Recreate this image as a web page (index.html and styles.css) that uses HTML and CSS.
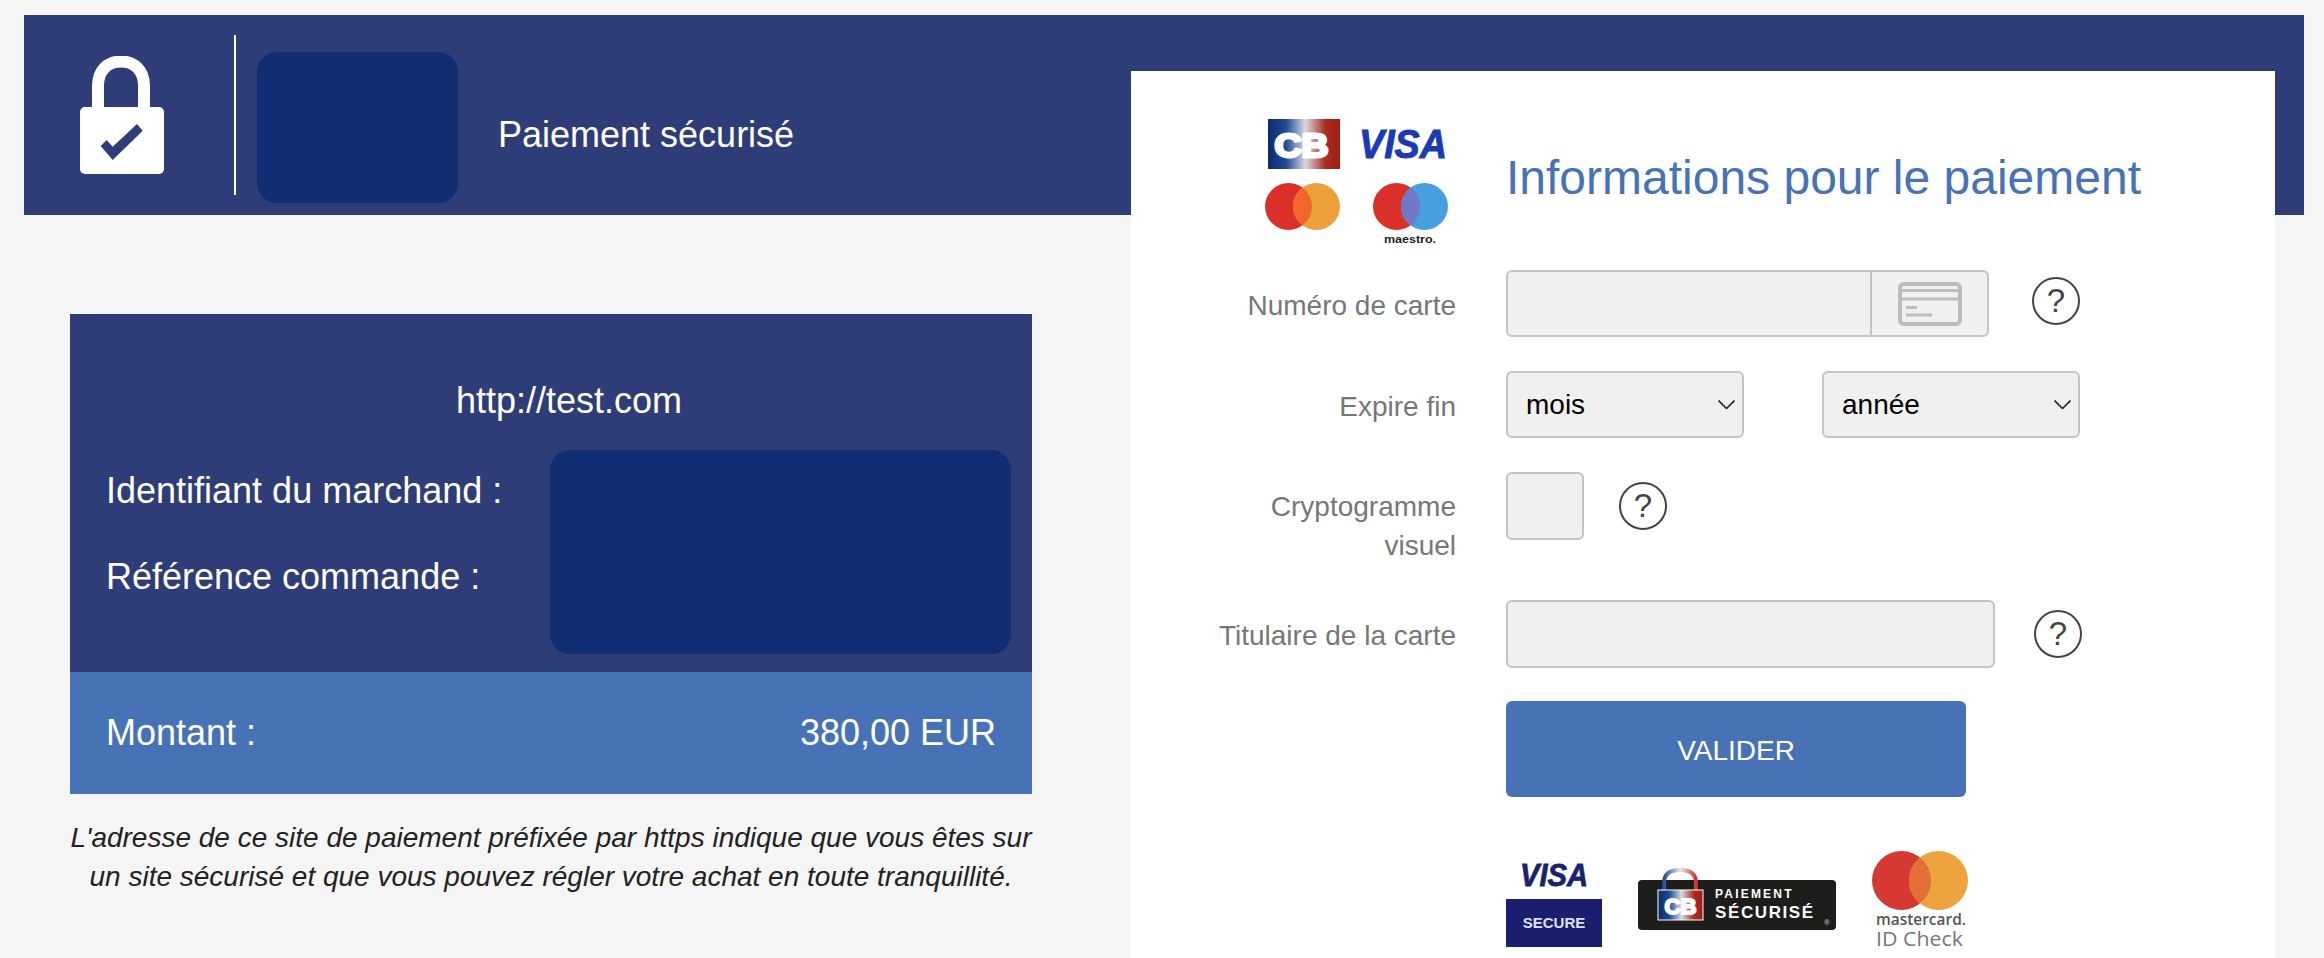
FILE: index.html
```html
<!DOCTYPE html>
<html lang="fr">
<head>
  <meta charset="UTF-8" />
  <meta name="viewport" content="width=device-width, initial-scale=1.0"/>
  <title>Paiement sécurisé</title>
  <link rel="stylesheet" href="styles.css">
</head>
<body>
  <svg class="defs" width="0" height="0">
    <defs>
      <linearGradient id="cb-grad" x1="0" y1="0" x2="1" y2="0">
        <stop offset="0" stop-color="#0d2a6b"/>
        <stop offset="0.25" stop-color="#1f4a94"/>
        <stop offset="0.52" stop-color="#d9d9de"/>
        <stop offset="0.8" stop-color="#ad2a20"/>
        <stop offset="1" stop-color="#9c1f18"/>
      </linearGradient>
      <linearGradient id="arc-grad" x1="0" y1="0" x2="1" y2="0">
        <stop offset="0" stop-color="#24508f"/>
        <stop offset="0.5" stop-color="#e8e8ea"/>
        <stop offset="1" stop-color="#c9362b"/>
      </linearGradient>
    </defs>
  </svg>

  <!-- Bandeau -->
  <header class="topbar">
    <svg class="lock" width="84" height="118" viewBox="0 0 84 118">
      <path d="M18 54V30C18 14 28 5.5 41 5.5S64 14 64 30V54" fill="none" stroke="#fff" stroke-width="12"/>
      <rect y="51" width="84" height="67" rx="5" fill="#fff"/>
      <path d="M20.7 90L32.7 104L62.7 74.7L57 68L32.7 90.7L26.7 84Z" fill="#2e3c77"/>
    </svg>
    <div class="topbar-sep"></div>
    <div class="topbar-mask"></div>
    <div class="topbar-title">Paiement sécurisé</div>
  </header>

  <main class="content">
    <!-- Récapitulatif -->
    <section class="summary">
      <div class="summary-top">
        <div class="merchant-url">http://test.com</div>
        <div class="merchant-row">
          <div class="merchant-labels">
            <div>Identifiant du marchand :</div>
            <div>Référence commande :</div>
          </div>
          <div class="merchant-mask"></div>
        </div>
      </div>
      <div class="amount">
        <span>Montant :</span>
        <span>380,00 EUR</span>
      </div>
      <p class="note">L'adresse de ce site de paiement préfixée par https indique que vous êtes sur<br>un site sécurisé et que vous pouvez régler votre achat en toute tranquillité.</p>
    </section>

    <!-- Formulaire -->
    <section class="card">
      <div class="card-head">
        <div class="brands">
          <svg width="75" height="50" viewBox="0 0 75 50">
            <rect x="3" width="72" height="50" fill="url(#cb-grad)"/>
            <text x="36.5" y="37.5" class="cb-text" textLength="54" lengthAdjust="spacingAndGlyphs">CB</text>
          </svg>
          <svg width="90" height="50" viewBox="0 0 90 50">
            <text x="45" y="39" class="visa-text" textLength="88" lengthAdjust="spacingAndGlyphs">VISA</text>
          </svg>
          <svg width="75" height="62" viewBox="0 0 75 62">
            <circle cx="23.5" cy="23.5" r="23.5" fill="#db2f2a"/>
            <circle cx="51.5" cy="23.5" r="23.5" fill="#eba03c"/>
            <path d="M37.5 4.6a23.5 23.5 0 0 1 0 37.8a23.5 23.5 0 0 1 0-37.8Z" fill="#f0662b"/>
          </svg>
          <svg width="75" height="62" viewBox="0 0 75 62">
            <circle cx="23.5" cy="23.5" r="23.5" fill="#db2f2a"/>
            <circle cx="51.5" cy="23.5" r="23.5" fill="#489fdf"/>
            <path d="M37.5 4.6a23.5 23.5 0 0 1 0 37.8a23.5 23.5 0 0 1 0-37.8Z" fill="#7278c8"/>
            <text x="37" y="60" class="maestro-text" textLength="52" lengthAdjust="spacingAndGlyphs">maestro.</text>
          </svg>
        </div>
        <h1>Informations pour le paiement</h1>
      </div>

      <form class="pay-form">
        <div class="row row-card">
          <label>Numéro de carte</label>
          <div class="field-number">
            <input type="text" />
            <span class="field-icon">
              <svg width="64" height="44" viewBox="0 0 64 44" fill="none" stroke="#bcbcbc">
                <rect x="2" y="2" width="60" height="40" rx="4" stroke-width="4"/>
                <path d="M2 8.5H62M2 17H62" stroke-width="3"/>
                <path d="M8 25.5H19M8 33H34" stroke-width="3"/>
              </svg>
            </span>
          </div>
          <span class="help">?</span>
        </div>

        <div class="row row-expiry">
          <label>Expire fin</label>
          <select class="select-month"><option>mois</option></select>
          <select class="select-year"><option>année</option></select>
        </div>

        <div class="row row-cvv">
          <label>Cryptogramme visuel</label>
          <input class="field-cvv" type="text" />
          <span class="help">?</span>
        </div>

        <div class="row row-holder">
          <label>Titulaire de la carte</label>
          <input class="field-holder" type="text" />
          <span class="help">?</span>
        </div>

        <div class="row row-submit">
          <span></span>
          <button type="button" class="submit">VALIDER</button>
        </div>

        <div class="row">
          <span></span>
          <div class="secure-logos">
            <svg width="96" height="100" viewBox="0 0 96 100">
              <text x="48" y="35" class="vs-visa" textLength="68" lengthAdjust="spacingAndGlyphs">VISA</text>
              <rect y="48" width="96" height="48" fill="#1b1f70"/>
              <text x="48" y="77" class="vs-secure">SECURE</text>
            </svg>
            <svg width="198" height="100" viewBox="0 0 198 100">
              <rect y="29" width="198" height="50" rx="4" fill="#1d1d1b"/>
              <path d="M26 40V32C26 23 32 19 42 19S58 23 58 32V40" fill="none" stroke="url(#arc-grad)" stroke-width="4"/>
              <rect x="20" y="39" width="45" height="30" fill="url(#cb-grad)" stroke="#fff" stroke-width="1"/>
              <text x="42.5" y="63" class="cb-small" textLength="32" lengthAdjust="spacingAndGlyphs">CB</text>
              <text x="77" y="47" class="ps-top">PAIEMENT</text>
              <text x="77" y="67" class="ps-bottom">SÉCURISÉ</text>
              <text x="186" y="74" class="ps-reg">®</text>
            </svg>
            <svg width="96" height="104" viewBox="0 0 96 104">
              <circle cx="29.5" cy="29.5" r="29.5" fill="#d43a33"/>
              <circle cx="66.5" cy="29.5" r="29.5" fill="#eea43e"/>
              <path d="M48 6.4a29.5 29.5 0 0 1 0 46.2a29.5 29.5 0 0 1 0-46.2Z" fill="#e26f38"/>
              <text x="4" y="74" class="mc-name" textLength="90" lengthAdjust="spacingAndGlyphs">mastercard.</text>
              <text x="4" y="95" class="mc-check" textLength="87" lengthAdjust="spacingAndGlyphs">ID Check</text>
            </svg>
          </div>
        </div>
      </form>
    </section>
  </main>
</body>
</html>
```

FILE: styles.css
```css
* {
  margin: 0;
  padding: 0;
  box-sizing: border-box;
  font-family: "Liberation Sans", Arial, sans-serif;
}

html, body {
  height: 100%;
  overflow: hidden;
}

body {
  background-color: #f5f5f5;
  padding: 15px 20px 0 24px;
}

.defs {
  display: block;
  height: 0;
}

/* Bandeau */
.topbar {
  display: flex;
  align-items: flex-start;
  height: 200px;
  background: #2e3c77;
  color: #fff;
  padding-left: 56px;
}

.lock {
  margin-top: 41px;
  flex: none;
}

.topbar-sep {
  width: 2px;
  height: 160px;
  margin: 20px 0 0 70px;
  background: #fff;
}

.topbar-mask {
  width: 201px;
  height: 151px;
  margin: 37px 0 0 21px;
  background: #112e75;
  border-radius: 20px;
}

.topbar-title {
  margin: 100px 0 0 40px;
  font-size: 36px;
  line-height: 40px;
}

/* Contenu */
.content {
  display: flex;
  justify-content: space-between;
  margin-top: -144px;
  padding: 0 29px 0 46px;
}

/* Récapitulatif */
.summary {
  width: 962px;
  margin-top: 243px;
  color: #fff;
}

.summary-top {
  background: #2e3c77;
  padding: 67px 21px 18px 36px;
  font-size: 36px;
  line-height: 40px;
}

.merchant-url {
  text-align: center;
  margin-left: 21px;
}

.merchant-row {
  display: flex;
  margin-top: 29px;
}

.merchant-labels {
  display: flex;
  flex-direction: column;
  gap: 46px;
  width: 444px;
  padding-top: 21px;
}

.merchant-mask {
  width: 461px;
  height: 204px;
  background: #112e75;
  border-radius: 20px;
}

.amount {
  display: flex;
  justify-content: space-between;
  align-items: center;
  height: 122px;
  padding: 0 36px;
  background: #4773b6;
  font-size: 36px;
}

.note {
  margin-top: 24px;
  color: #222;
  font-size: 28px;
  font-style: italic;
  line-height: 39px;
  text-align: center;
}

/* Formulaire */
.card {
  width: 1144px;
  height: 900px;
  background: #fff;
  padding-top: 48px;
}

.card-head {
  display: flex;
  height: 151px;
  padding-left: 134px;
}

.brands {
  display: grid;
  grid-template-columns: 75px 90px;
  grid-template-rows: 50px 62px;
  column-gap: 18px;
  row-gap: 14px;
  justify-items: end;
  width: 183px;
}

.brands svg {
  overflow: visible;
}

.cb-text {
  fill: #fff;
  stroke: #fff;
  stroke-width: 3;
  stroke-linejoin: round;
  font-size: 34px;
  font-weight: bold;
  text-anchor: middle;
}

.visa-text {
  fill: #1a3bb3;
  stroke: #1a3bb3;
  stroke-width: 1;
  font-size: 41px;
  font-weight: bold;
  font-style: italic;
  text-anchor: middle;
}

.maestro-text {
  fill: #222;
  font-size: 11px;
  font-weight: bold;
  text-anchor: middle;
}

h1 {
  margin: 31px 0 0 58px;
  color: #4773b6;
  font-size: 48px;
  font-weight: normal;
  line-height: 56px;
  white-space: nowrap;
}

.row {
  display: grid;
  grid-template-columns: 325px auto auto;
  column-gap: 50px;
  justify-content: start;
  align-items: start;
}

.row-card, .row-expiry {
  margin-bottom: 34px;
}

.row-cvv {
  margin-bottom: 35px;
}

.row-holder {
  margin-bottom: 33px;
}

.row-submit {
  margin-bottom: 54px;
}

label {
  padding-top: 16px;
  color: #777;
  font-size: 28px;
  line-height: 39px;
  text-align: right;
}

.row-cvv label {
  padding-top: 15px;
  padding-left: 100px;
}

input, select {
  background-color: #f0f0f0;
  border: 2px solid #c4c4c4;
  border-radius: 6px;
  outline: none;
}

.field-number {
  display: flex;
  width: 483px;
  height: 67px;
  background: #f0f0f0;
  border: 2px solid #c4c4c4;
  border-radius: 6px;
}

.field-number input {
  flex: 1;
  min-width: 0;
  border: none;
  background: transparent;
}

.field-icon {
  display: flex;
  align-items: center;
  justify-content: center;
  width: 117px;
  border-left: 2px solid #c4c4c4;
}

select {
  height: 67px;
  padding-left: 18px;
  color: #000;
  font-size: 28px;
  appearance: none;
  background-image: url("data:image/svg+xml,%3Csvg xmlns='http://www.w3.org/2000/svg' width='17' height='9'%3E%3Cpath d='M.5.5l8 8 8-8' fill='none' stroke='%23222' stroke-width='1.6'/%3E%3C/svg%3E");
  background-repeat: no-repeat;
  background-position: right 7px center;
}

.select-month {
  width: 238px;
}

.select-year {
  width: 258px;
  margin-left: 28px;
}

.row-card .help {
  margin-left: -7px;
}

.help {
  display: flex;
  align-items: center;
  justify-content: center;
  width: 48px;
  height: 48px;
  margin-top: 7px;
  border: 2px solid #444;
  border-radius: 50%;
  color: #444;
  font-size: 33px;
}

.row-cvv .help {
  margin-top: 10px;
  margin-left: -15px;
}

.row-holder .help {
  margin-top: 10px;
  margin-left: -11px;
}

.field-cvv {
  width: 78px;
  height: 68px;
}

.field-holder {
  width: 489px;
  height: 68px;
}

.submit {
  width: 460px;
  height: 96px;
  padding-top: 3px;
  border: none;
  border-radius: 6px;
  background: #4773b6;
  color: #fff;
  font-size: 28px;
}

.secure-logos {
  display: flex;
  gap: 36px;
}

.vs-visa {
  fill: #1b1f70;
  stroke: #1b1f70;
  stroke-width: 0.8;
  font-size: 31px;
  font-weight: bold;
  font-style: italic;
  text-anchor: middle;
}

.vs-secure {
  fill: #dfe0ee;
  font-size: 15px;
  font-weight: bold;
  text-anchor: middle;
}

.cb-small {
  fill: #fff;
  stroke: #fff;
  stroke-width: 2;
  stroke-linejoin: round;
  font-size: 22px;
  font-weight: bold;
  text-anchor: middle;
}

.ps-top {
  fill: #fff;
  font-size: 12px;
  font-weight: bold;
  letter-spacing: 2.2px;
}

.ps-bottom {
  fill: #fff;
  font-size: 17px;
  font-weight: bold;
  letter-spacing: 1.6px;
}

.ps-reg {
  fill: #ccc;
  font-size: 8px;
}

.mc-name {
  fill: #555;
  font-family: "Open Sans", sans-serif;
  font-size: 16px;
  font-weight: 600;
}

.mc-check {
  fill: #777;
  font-family: "Open Sans", sans-serif;
  font-size: 20px;
}
```
